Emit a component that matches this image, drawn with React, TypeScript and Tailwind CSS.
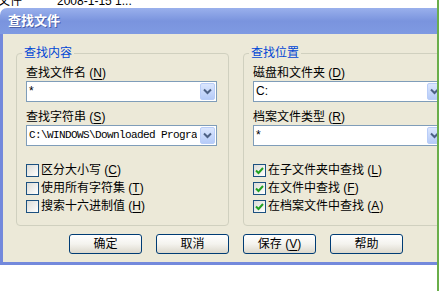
import React from "react";

const ui = { fontFamily: '"Liberation Sans", "Noto Sans CJK SC", sans-serif' };
const mono = { fontFamily: '"Liberation Mono", "Noto Sans CJK SC", monospace' };

function Acc({ k }: { k: string }) {
  return (
    <span>
      {"\u00a0("}
      <span className="underline underline-offset-2">{k}</span>
      {")"}
    </span>
  );
}

function DropBtn() {
  return (
    <div className="w-[15px] h-[17px] mt-[1px] mr-[1px] rounded-[2px] border border-[#b9cdf8] bg-gradient-to-b from-[#dbe6fd] to-[#b5cbf8] flex items-center justify-center">
      <svg width="9" height="7" viewBox="0 0 9 7">
        <path d="M1 1.5 L4.5 5 L8 1.5" fill="none" stroke="#4d6185" strokeWidth="2" />
      </svg>
    </div>
  );
}

function Combo({ text, isMono }: { text: string; isMono?: boolean }) {
  return (
    <div className="w-[191px] h-[21px] shrink-0 bg-white border border-[#7f9db9] flex justify-between">
      <div
        className="pl-[2px] text-[12px] leading-[19px] text-black whitespace-nowrap overflow-hidden"
        style={isMono ? { ...mono, letterSpacing: "-0.6px", fontSize: "11px" } : ui}
      >
        {text}
      </div>
      <DropBtn />
    </div>
  );
}

function Check({ checked, label, k }: { checked?: boolean; label: string; k: string }) {
  return (
    <div className="h-[18px] flex items-center gap-[2px]">
      <div className="w-[13px] h-[13px] border border-[#1c5180] bg-gradient-to-br from-[#dcdcd7] to-white flex items-center justify-center">
        {checked && (
          <svg width="9" height="9" viewBox="0 0 9 9">
            <path d="M1 4.5 L3.5 7 L8 2" fill="none" stroke="#21a121" strokeWidth="2" />
          </svg>
        )}
      </div>
      <span className="text-[12px] leading-[14px] text-black whitespace-nowrap">
        {label}
        <Acc k={k} />
      </span>
    </div>
  );
}

function Label({ text, k }: { text: string; k: string }) {
  return (
    <div className="text-[12px] leading-[14px] text-black whitespace-nowrap">
      {text}
      <Acc k={k} />
    </div>
  );
}

function Group({ title, children, width }: { title: string; children: React.ReactNode; width: string }) {
  return (
    <div className={`relative shrink-0 ${width} border border-[#d0d0bf] rounded-[4px] pl-[9px] pt-[12px] pb-[10px]`}>
      <div className="absolute -top-[8px] left-[5px] px-[2px] bg-[#ece9d8] text-[12px] leading-[14px] text-[#0046d5] whitespace-nowrap">
        {title}
      </div>
      {children}
    </div>
  );
}

function Btn({ children }: { children: React.ReactNode }) {
  return (
    <div className="w-[73px] h-[20px] rounded-[3px] border border-[#003c74] bg-gradient-to-b from-white via-[#f4f3ee] to-[#dcd8cc] flex items-center justify-center text-[12px] text-black whitespace-nowrap">
      <span>{children}</span>
    </div>
  );
}

export default function App() {
  return (
    <div className="w-[439px] h-[291px] bg-white flex overflow-hidden" style={ui}>
      <div className="w-[437px] flex flex-col">
        <div className="h-[8px] overflow-hidden flex text-[12px] leading-[14px] text-black">
          <span className="-mt-[6px] -ml-[2px] whitespace-nowrap">文件</span>
          <span className="-mt-[6px] ml-[35px] whitespace-nowrap">2008-1-15 1...</span>
        </div>
        <div className="h-[26px] rounded-tl-[7px] bg-gradient-to-b from-[#9ab0ec] via-[#7a94de] to-[#7f9ae2] flex items-center pl-[8px]">
          <span
            className="text-[13px] font-bold text-white"
            style={{ textShadow: "1px 1px 0 #4a5fa8" }}
          >
            查找文件
          </span>
        </div>
        <div className="bg-[#ece9d8] border-l-[3px] border-b-[3px] border-[#7389dc] flex flex-col overflow-hidden">
          <div className="flex gap-[14px] pl-[13px] mt-[19px]">
            <Group title="查找内容" width="w-[213px]">
              <Label text="查找文件名" k="N" />
              <div className="mt-[1px]">
                <Combo text="*" />
              </div>
              <div className="mt-[8px]">
                <Label text="查找字符串" k="S" />
              </div>
              <div className="mt-[1px]">
                <Combo text="C:\WINDOWS\Downloaded Progra" isMono />
              </div>
              <div className="mt-[15px] flex flex-col">
                <Check label="区分大小写" k="C" />
                <Check label="使用所有字符集" k="T" />
                <Check label="搜索十六进制值" k="H" />
              </div>
            </Group>
            <Group title="查找位置" width="w-[213px]">
              <Label text="磁盘和文件夹" k="D" />
              <div className="mt-[1px]">
                <Combo text="C:" />
              </div>
              <div className="mt-[8px]">
                <Label text="档案文件类型" k="R" />
              </div>
              <div className="mt-[1px]">
                <Combo text="*" />
              </div>
              <div className="mt-[15px] flex flex-col">
                <Check checked label="在子文件夹中查找" k="L" />
                <Check checked label="在文件中查找" k="F" />
                <Check checked label="在档案文件中查找" k="A" />
              </div>
            </Group>
          </div>
          <div className="flex gap-[14px] pl-[66px] mt-[8px] mb-[8px]">
            <Btn>确定</Btn>
            <Btn>取消</Btn>
            <Btn>
              保存<Acc k="V" />
            </Btn>
            <Btn>帮助</Btn>
          </div>
        </div>
      </div>
      <div className="w-[2px] h-full bg-[#6aae4a]" />
    </div>
  );
}
